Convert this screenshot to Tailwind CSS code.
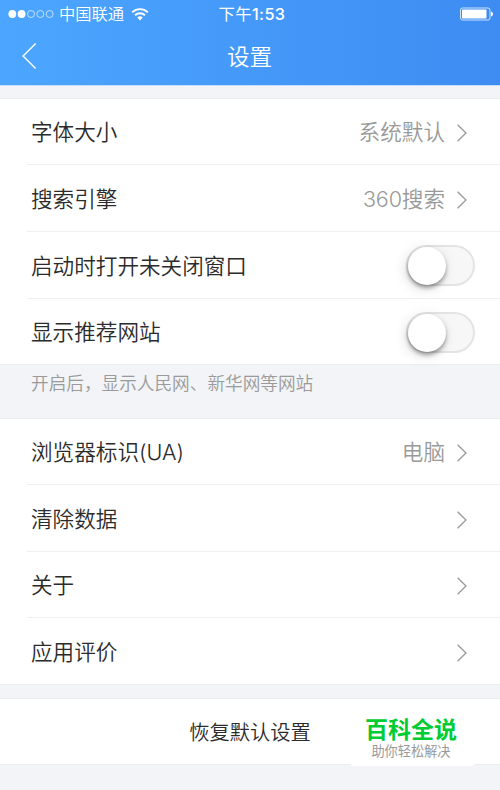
<!DOCTYPE html>
<html lang="zh-CN">
<head>
<meta charset="utf-8">
<title>设置</title>
<script src="https://cdn.jsdelivr.net/npm/@tailwindcss/browser@4"></script>
</head>
<body class="w-[500px] h-[790px] overflow-hidden bg-[#f2f4f7] text-[#2b2b2b] font-[350] font-['Inter','Noto_Sans_CJK_SC',sans-serif]">
<header class="h-[86px] border-b border-[#c5dffb] bg-linear-to-r from-[#4ca6ff] to-[#3e8cf2] text-white">
  <div class="grid grid-cols-[1fr_auto_1fr] items-center h-[27px] pl-2 pr-[7px]">
    <div class="flex items-center">
      <svg class="w-[47px] h-[10px]" viewBox="0 0 47 10" fill="none" stroke="#fff" stroke-opacity=".8" stroke-width=".8"><circle cx="4.3" cy="5" r="3.9" fill="#fff" stroke="none"/><circle cx="13.6" cy="5" r="3.9" fill="#fff" stroke="none"/><circle cx="23" cy="5" r="3.5"/><circle cx="32.3" cy="5" r="3.5"/><circle cx="41.6" cy="5" r="3.5"/></svg>
      <span class="ml-1 pt-px text-[16.3px] leading-[27px]">中国联通</span>
      <svg class="ml-[7px] -mt-px w-[18px] h-[14px]" viewBox="0 0 18 14" fill="none" stroke="#fff" stroke-width="1.9"><path d="M1.2 5.2a11.3 11.3 0 0 1 15.6 0M4 8.2a7.3 7.3 0 0 1 10 0"/><path d="M6.2 10.6a4.1 4.1 0 0 1 5.6 0L9 13.4z" fill="#fff" stroke="none"/></svg>
    </div>
    <span class="pt-px ml-[3px] text-[16.3px] leading-[27px] tracking-[0.4px] font-normal">下午<span class="font-medium">1:53</span></span>
    <svg class="justify-self-end w-[34px] h-[14px]" viewBox="0 0 34 14"><rect x="1.5" y="1" width="29.5" height="12" rx="2" fill="none" stroke="#fff" stroke-opacity=".75"/><rect x="3" y="2.5" width="24.5" height="9" rx=".7" fill="#fff"/><path d="M32 4.5q2 .5 2 2.5t-2 2.5z" fill="#fff"/></svg>
  </div>
  <div class="grid grid-cols-[1fr_auto_1fr] items-center h-[58px] pl-[21px] pr-[22px]">
    <svg class="w-4 h-[28px]" viewBox="0 0 16 28" fill="none" stroke="#fff" stroke-width="1.4"><path d="M14.6 1.5 2.1 14l12.5 12.5"/></svg>
    <h1 class="pt-px text-[22.6px] leading-[57px]">设置</h1>
    <span></span>
  </div>
</header>
<main>
  <section class="mt-[12px] h-[267px] bg-white border-y border-[#eaecee] pl-[27px] grid grid-rows-[66px_67px_67px_65px] text-[21.6px] leading-[60px]">
    <div class="flex items-center pt-px pl-1 pr-8 border-b border-[#efefef]"><span>字体大小</span><span class="ml-auto text-[#999]">系统默认</span><svg class="ml-[11px] mt-0.5 w-3 h-5" viewBox="0 0 12 20" fill="none" stroke="#999" stroke-width="1.3"><path d="m1.6 1.7 8.4 8.3-8.4 8.3"/></svg></div>
    <div class="flex items-center pt-[2px] pl-1 pr-8 border-b border-[#efefef]"><span>搜索引擎</span><span class="ml-auto text-[#999]"><span class="tracking-[-0.2px]">360</span>搜索</span><svg class="ml-[11px] mt-0.5 w-3 h-5" viewBox="0 0 12 20" fill="none" stroke="#999" stroke-width="1.3"><path d="m1.6 1.7 8.4 8.3-8.4 8.3"/></svg></div>
    <div class="flex items-center pt-px pl-1 pr-[25px] border-b border-[#efefef]"><span>启动时打开未关闭窗口</span><div class="ml-auto w-[69px] h-[41px] rounded-full border-2 border-[#e4e4e4] bg-[#f7f7f7]"><div class="w-[38px] h-[38px] rounded-full bg-white shadow-[0_3px_4px_rgba(0,0,0,.35),-2px_3px_14px_rgba(0,0,0,.14)]"></div></div></div>
    <div class="flex items-center pt-px pl-1 pr-[25px]"><span>显示推荐网站</span><div class="ml-auto w-[69px] h-[41px] rounded-full border-2 border-[#e4e4e4] bg-[#f7f7f7]"><div class="w-[38px] h-[38px] rounded-full bg-white shadow-[0_3px_4px_rgba(0,0,0,.35),-2px_3px_14px_rgba(0,0,0,.14)]"></div></div></div>
  </section>
  <p class="h-[53px] pl-[31px] text-[17.65px] leading-[37px] text-[#9a9a9a]">开启后，显示人民网、新华网等网站</p>
  <section class="h-[267px] bg-white border-y border-[#eaecee] pl-[27px] grid grid-rows-[66px_67px_66px_66px] text-[21.6px] leading-[60px]">
    <div class="flex items-center pt-px pl-1 pr-8 border-b border-[#efefef]"><span>浏览器标识(UA)</span><span class="ml-auto text-[#999]">电脑</span><svg class="ml-[11px] mt-0.5 w-3 h-5" viewBox="0 0 12 20" fill="none" stroke="#999" stroke-width="1.3"><path d="m1.6 1.7 8.4 8.3-8.4 8.3"/></svg></div>
    <div class="flex items-center pt-[2px] pl-1 pr-8 border-b border-[#efefef]"><span>清除数据</span><svg class="ml-auto mt-0.5 w-3 h-5" viewBox="0 0 12 20" fill="none" stroke="#999" stroke-width="1.3"><path d="m1.6 1.7 8.4 8.3-8.4 8.3"/></svg></div>
    <div class="flex items-center pt-px pl-1 pr-8 border-b border-[#efefef]"><span>关于</span><svg class="ml-auto mt-0.5 w-3 h-5" viewBox="0 0 12 20" fill="none" stroke="#999" stroke-width="1.3"><path d="m1.6 1.7 8.4 8.3-8.4 8.3"/></svg></div>
    <div class="flex items-center pt-px pl-1 pr-8"><span>应用评价</span><svg class="ml-auto mt-0.5 w-3 h-5" viewBox="0 0 12 20" fill="none" stroke="#999" stroke-width="1.3"><path d="m1.6 1.7 8.4 8.3-8.4 8.3"/></svg></div>
  </section>
  <section class="relative mt-[13px] h-[67px] bg-white border-y border-[#eaecee] text-center text-[20.3px] leading-[68px]">恢复默认设置
    <div class="absolute left-[350px] top-[8px] w-[125px] h-[59px] bg-white rounded-b-sm text-center pr-[3px]">
      <div class="text-[23px] leading-[28px] pt-[9px] font-bold text-[#0c3]">百科全说</div>
      <div class="-mt-px text-[13.2px] leading-[16px] font-normal text-[#999]">助你轻松解决</div>
    </div>
  </section>
</main>
</body>
</html>
